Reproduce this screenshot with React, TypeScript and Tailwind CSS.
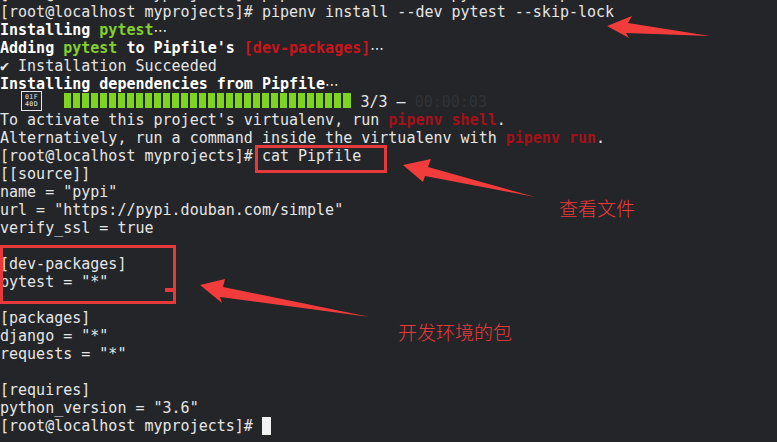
const PROMPT = "[root@localhost myprojects]# ";

function Line({ children, className = "" }: { children?: React.ReactNode; className?: string }) {
  return <div className={`h-[18px] whitespace-pre ${className}`}>{children}</div>;
}

function Dots() {
  return <span className="font-normal font-['DejaVu_Sans',sans-serif] text-[14px]">⋯</span>;
}

function ProgressLine() {
  const blocks = Array.from({ length: 32 });
  return (
    <div className="h-[18px] flex items-start whitespace-pre">
      {/* missing glyph box for the snake emoji */}
      <div className="ml-[21px] mt-[-1.5px] w-[21px] h-[20px] border border-[#e6e6e6] flex flex-col items-center justify-center text-[6.5px] leading-[7.5px] text-[#e6e6e6] tracking-[0.5px]">
        <span>01F</span>
        <span>40D</span>
      </div>
      <div className="ml-[22px] mt-[0.5px] flex gap-[2px]">
        {blocks.map((_, i) => (
          <span key={i} className="block w-[7.03px] h-[15px] bg-[#7fd422]" />
        ))}
      </div>
      <span className="ml-[10px] text-[#e6e6e6]">3/3 — </span>
      <span className="text-[#303336]">00:00:03</span>
    </div>
  );
}

export default function App() {
  return (
    <div className="relative w-[777px] h-[442px] overflow-hidden bg-[#232528] font-['DejaVu_Sans_Mono',monospace] text-[15px] leading-[18px] text-[#e6e6e6]">
      <div className="mt-[-15.5px]">
        <Line>{PROMPT}pipenv install --dev pytest --skip-lock</Line>
        <Line>{PROMPT}pipenv install --dev pytest --skip-lock</Line>
        <Line className="font-bold text-white">
          Installing <span className="text-[#83d02e]">pytest</span>
          <Dots />
        </Line>
        <Line className="font-bold text-white">
          Adding <span className="text-[#83d02e]">pytest</span> to Pipfile's{" "}
          <span className="text-[#c8161d]">[dev-packages]</span>
          <Dots />
        </Line>
        <Line>✔ Installation Succeeded</Line>
        <Line className="font-bold text-white">
          Installing dependencies from Pipfile<Dots />
        </Line>
        <ProgressLine />
        <Line>
          To activate this project's virtualenv, run <span className="font-bold text-[#a3121a]">pipenv shell</span>.
        </Line>
        <Line>
          Alternatively, run a command inside the virtualenv with{" "}
          <span className="font-bold text-[#a3121a]">pipenv run</span>.
        </Line>
        <Line>{PROMPT}cat Pipfile</Line>
        <Line>[[source]]</Line>
        <Line>name = "pypi"</Line>
        <Line>url = "https://pypi.douban.com/simple"</Line>
        <Line>verify_ssl = true</Line>
        <Line />
        <Line>[dev-packages]</Line>
        <Line>pytest = "*"</Line>
        <Line />
        <Line>[packages]</Line>
        <Line>django = "*"</Line>
        <Line>requests = "*"</Line>
        <Line />
        <Line>[requires]</Line>
        <Line>python_version = "3.6"</Line>
        <Line className="flex">
          {PROMPT}
          <span className="block w-[9px] h-[18px] bg-[#f2f2f2]" />
        </Line>
      </div>

      {/* annotation boxes */}
      <div className="absolute left-[255px] top-[145px] w-[132px] h-[28px] border-[3px] border-[#e5393b]" />
      <div className="absolute left-0 top-[245px] w-[176px] h-[59px] border-[3px] border-[#e5393b]" />
      <div className="absolute left-[165px] top-[288px] w-[9px] h-[4px] bg-[#e5393b]" />

      {/* annotation arrows */}
      <svg className="absolute inset-0 pointer-events-none" width="777" height="442" viewBox="0 0 777 442">
        <polygon points="607,26 632,16 628,23 710,36 626,33 629,38" fill="#f23c3c" />
        <polygon points="403,165 431,159 428,167 535,197 425,176 423,182" fill="#f23c3c" />
        <polygon points="200,285 225,279 223,287 370,317 220,297 222,303" fill="#f23c3c" />
      </svg>

      {/* annotation labels */}
      <span className="absolute left-[559px] top-[197px] font-['Noto_Sans_CJK_SC',sans-serif] font-light text-[19px] leading-[22px] text-[#f0393b]">
        查看文件
      </span>
      <span className="absolute left-[398px] top-[321px] font-['Noto_Sans_CJK_SC',sans-serif] font-light text-[19px] leading-[22px] text-[#f0393b]">
        开发环境的包
      </span>
    </div>
  );
}
